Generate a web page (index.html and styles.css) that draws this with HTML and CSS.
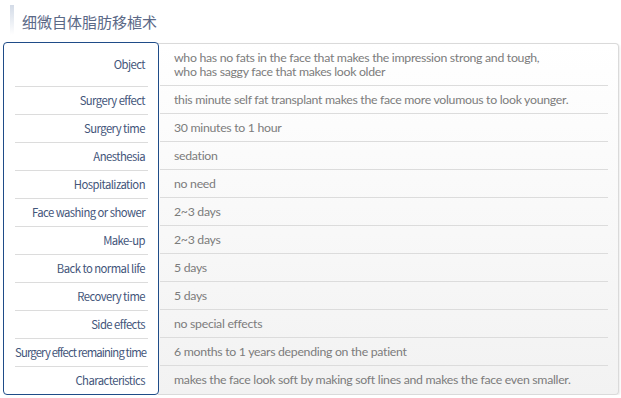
FILE: index.html
```html
<!DOCTYPE html>
<html lang="en">
<head>
    <meta charset="UTF-8">
    <title>细微自体脂肪移植术</title>
    <link rel="stylesheet" href="styles.css">
</head>
<body>
    <h2 class="title">细微自体脂肪移植术</h2>
    <div class="info">
        <div class="labels">
            <div class="label tall">Object</div>
            <div class="label">Surgery effect</div>
            <div class="label">Surgery time</div>
            <div class="label">Anesthesia</div>
            <div class="label">Hospitalization</div>
            <div class="label">Face washing or shower</div>
            <div class="label">Make-up</div>
            <div class="label">Back to normal life</div>
            <div class="label">Recovery time</div>
            <div class="label">Side effects</div>
            <div class="label narrow">Surgery effect remaining time</div>
            <div class="label last">Characteristics</div>
        </div>
        <div class="values">
            <div class="value tall">
                <p>who has no fats in the face that makes the impression strong and tough,</p>
                <p>who has saggy face that makes look older</p>
            </div>
            <div class="value">this minute self fat transplant makes the face more volumous to look younger.</div>
            <div class="value">30 minutes to 1 hour</div>
            <div class="value">sedation</div>
            <div class="value">no need</div>
            <div class="value">2~3 days</div>
            <div class="value">2~3 days</div>
            <div class="value">5 days</div>
            <div class="value">5 days</div>
            <div class="value">no special effects</div>
            <div class="value">6 months to 1 years depending on the patient</div>
            <div class="value last">makes the face look soft by making soft lines and makes the face even smaller.</div>
        </div>
    </div>
</body>
</html>
```

FILE: styles.css
```css
body {
    margin: 0;
    width: 621px;
    font-family: "Noto Sans CJK JP", "Liberation Sans", sans-serif;
    font-size: 12px;
    background-color: #fff;
}

.title {
    margin: 0;
    height: 42px;
    padding-left: 22px;
    font-size: 15px;
    font-weight: normal;
    line-height: 44px;
    color: #5b6987;
    position: relative;
}

/* faded bar in front of the heading */
.title::before {
    content: "";
    position: absolute;
    left: 10px;
    top: 5px;
    width: 4px;
    height: 30px;
    background: linear-gradient(to bottom, #d3dbe7, #fff);
}

.info {
    display: flex;
    padding-left: 3px;
}

.labels {
    width: 133px;
    padding: 0 10px 0 11px;
    border: 1px solid #1f4c88;
    border-radius: 4px;
    background-color: #fff;
    position: relative;
    z-index: 1;
}

.label {
    height: 27px;
    line-height: 26px;
    text-align: right;
    padding-right: 3px;
    font-size: 11.3px;
    letter-spacing: -0.55px;
    color: #43557a;
    border-bottom: 1px solid #dcdcdc;
    white-space: nowrap;
}

.label.narrow {
    letter-spacing: -0.85px;
}

.label.tall {
    height: 43px;
    line-height: 42px;
}

.label.last {
    border-bottom: none;
}

.values {
    width: 448px;
    margin-top: 1px;
    margin-left: -1px;
    padding: 0 10px 0 2px;
    border: 1px solid #dadada;
    border-left: none;
    border-radius: 0 4px 4px 0;
    background: linear-gradient(to bottom, #fff, #f2f2f2);
    box-shadow: 1px 1px 2px rgba(0, 0, 0, 0.08);
}

.value {
    height: 27px;
    line-height: 27px;
    padding-left: 14px;
    font-family: Lato, "Noto Sans CJK JP", sans-serif;
    font-size: 12.3px;
    letter-spacing: -0.3px;
    color: #7c7c7c;
    border-bottom: 1px solid #dcdcdc;
    white-space: nowrap;
}

.value.tall {
    height: 42px;
    display: flex;
    flex-direction: column;
    justify-content: center;
    padding-top: 1px;
    box-sizing: border-box;
}

.value.tall p {
    margin: 0;
    height: 14px;
    line-height: 14px;
}

.value.last {
    border-bottom: none;
}
```
